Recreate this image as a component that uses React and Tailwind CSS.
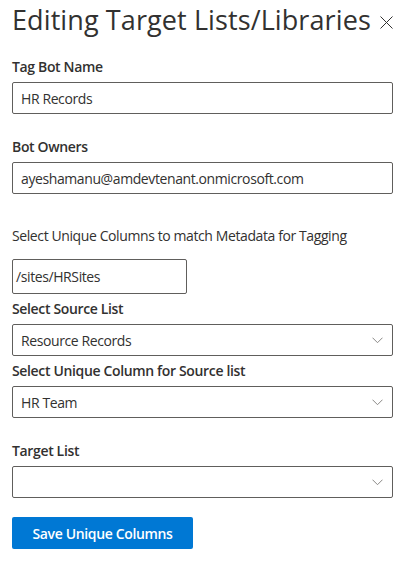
import React from "react";

const font = { fontFamily: '"Open Sans", "Noto Sans", sans-serif' };

function Label({ children }) {
  return (
    <div className="py-[5px] text-[14px] leading-[20px] font-semibold text-[#323130] tracking-[-0.35px]">
      {children}
    </div>
  );
}

function Input({ value, className = "" }) {
  return (
    <div
      className={`h-[32px] border border-[#605e5c] rounded-[2px] flex items-center px-[8px] text-[14px] text-[#323130] ${className}`}
    >
      {value}
    </div>
  );
}

function Chevron() {
  return (
    <svg width="11" height="7" viewBox="0 0 11 7" fill="none">
      <path d="M0.5 0.7 L5.5 5.7 L10.5 0.7" stroke="#8a8886" strokeWidth="1" />
    </svg>
  );
}

function Dropdown({ value }) {
  return (
    <div className="h-[32px] border border-[#605e5c] rounded-[2px] flex items-center justify-between pl-[8px] pr-[9px] text-[14px] text-[#323130]">
      <span>{value}</span>
      <Chevron />
    </div>
  );
}

export default function App() {
  return (
    <div className="w-[405px] h-[561px] bg-white px-[12px] overflow-hidden tracking-[-0.4px]" style={font}>
      <div className="flex items-start justify-between h-[52px]">
        <div className="text-[27px] leading-[36px] pt-[2px] text-[#323130] tracking-[0.1px] whitespace-nowrap">
          Editing Target Lists/Libraries
        </div>
        <svg width="13" height="13" viewBox="0 0 13 13" className="mt-[16px] shrink-0">
          <path d="M0.5 0.5 L12.5 12.5 M12.5 0.5 L0.5 12.5" stroke="#323130" strokeWidth="1" />
        </svg>
      </div>
      <Label>Tag Bot Name</Label>
      <Input value="HR Records" />
      <div className="mt-[18px]">
        <Label>Bot Owners</Label>
      </div>
      <Input value="ayeshamanu@amdevtenant.onmicrosoft.com" />
      <div className="mt-[32px] text-[14px] leading-[20px] text-[#323130]">
        Select Unique Columns to match Metadata for Tagging
      </div>
      <Input value="/sites/HRSites" className="mt-[13px] w-[175px] h-[35px] !px-[3px]" />
      <Label>Select Source List</Label>
      <Dropdown value="Resource Records" />
      <Label>Select Unique Column for Source list</Label>
      <Dropdown value="HR Team" />
      <div className="mt-[18px]">
        <Label>Target List</Label>
      </div>
      <Dropdown value="" />
      <button className="mt-[19px] h-[32px] w-[181px] bg-[#0078d4] rounded-[2px] text-white text-[14px] font-semibold tracking-[-0.35px]">
        Save Unique Columns
      </button>
    </div>
  );
}
